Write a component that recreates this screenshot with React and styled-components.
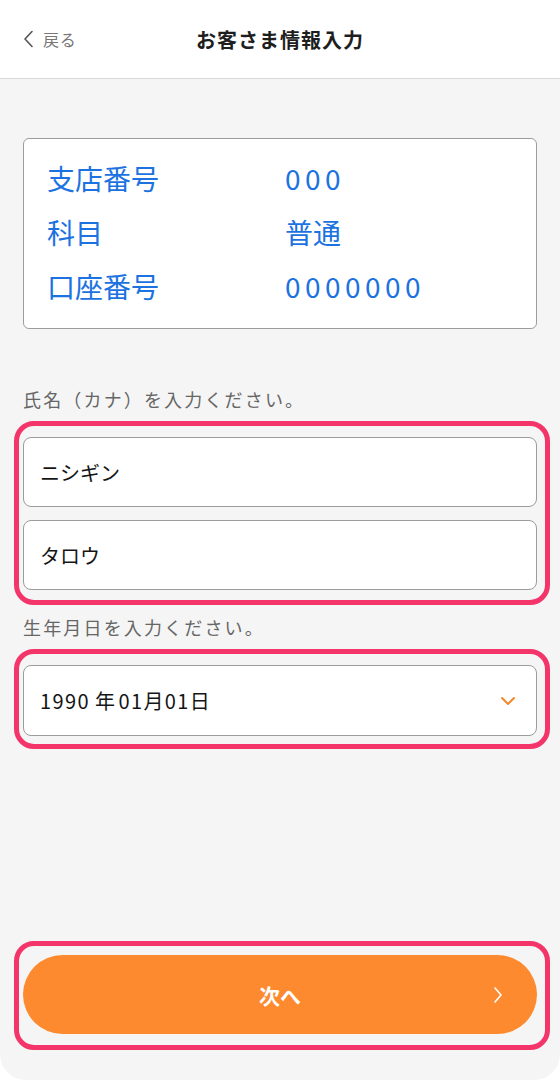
import styled, { createGlobalStyle } from 'styled-components';

const GlobalStyle = createGlobalStyle`
  html, body {
    margin: 0;
    padding: 0;
    background: #ffffff;
  }
  body {
    font-family: "Noto Sans CJK JP", "Noto Sans", sans-serif;
    -webkit-font-smoothing: antialiased;
  }
  * {
    box-sizing: border-box;
  }
`;

const Screen = styled.div`
  display: flex;
  flex-direction: column;
  width: 560px;
  min-height: 1080px;
  background: #f5f5f5;
  border-radius: 0 0 26px 26px;
  overflow: hidden;
`;

const Header = styled.header`
  display: grid;
  grid-template-columns: 1fr auto 1fr;
  align-items: center;
  height: 79px;
  padding: 0 23px;
  background: #ffffff;
  border-bottom: 1px solid #d9d9d9;
`;

const BackLink = styled.button`
  display: flex;
  align-items: center;
  gap: 9px;
  padding: 0;
  border: 0;
  background: none;
  color: #777777;
  font-family: inherit;
  font-size: 16px;
  letter-spacing: 0.05em;
  cursor: pointer;
  justify-self: start;
`;

const Title = styled.h1`
  margin: 0;
  font-size: 20px;
  font-weight: 700;
  color: #1e1e1e;
  letter-spacing: 0.05em;
`;

const Content = styled.main`
  display: flex;
  flex-direction: column;
  flex: 1;
  padding: 59px 23px 30px;
`;

const InfoCard = styled.section`
  display: flex;
  flex-direction: column;
  padding: 12px 23px 15px;
  background: #ffffff;
  border: 1px solid #9c9c9c;
  border-radius: 6px;
`;

const InfoRow = styled.div`
  display: grid;
  grid-template-columns: 238px 1fr;
  align-items: center;
  height: 54px;
  color: #1b72e0;
  font-size: 28px;
`;

const InfoValue = styled.span`
  letter-spacing: ${(p) => (p.$numeric ? '0.16em' : '0')};
`;

const FieldLabel = styled.p`
  margin: ${(p) => p.$top}px 0 10px;
  font-size: 18px;
  line-height: 24px;
  letter-spacing: 0.12em;
  color: #666666;
`;

const Highlight = styled.div`
  display: flex;
  flex-direction: column;
  gap: 13px;
  margin: 0 -13px 0 -9px;
  padding: ${(p) => p.$pad || '11px 8px 10px 4px'};
  border: 5px solid #f3356a;
  border-radius: 20px;
`;

const TextBox = styled.div`
  display: flex;
  align-items: center;
  justify-content: space-between;
  height: ${(p) => p.$h || 70}px;
  padding: 0 20px 0 16px;
  background: #ffffff;
  border: 1px solid #9c9c9c;
  border-radius: 8px;
  color: #151515;
  font-size: 20px;
`;

const DateText = styled.span`
  letter-spacing: 0.07em;
`;

const DatePart = styled.span`
  margin-right: ${(p) => p.$gap || 0}px;
`;

const Spacer = styled.div`
  flex: 1;
`;

const NextButton = styled.button`
  position: relative;
  display: flex;
  align-items: center;
  justify-content: center;
  width: 100%;
  height: 79px;
  border: 0;
  border-radius: 40px;
  background: #fd8a2f;
  color: #ffffff;
  font-family: inherit;
  font-size: 21px;
  font-weight: 700;
  cursor: pointer;
`;

const ButtonChevron = styled.svg`
  position: absolute;
  right: 34px;
  top: 50%;
  transform: translateY(-50%);
`;

export default function App() {
  return (
    <>
      <GlobalStyle />
      <Screen>
        <Header>
          <BackLink>
            <svg width="11" height="18" viewBox="0 0 11 18" fill="none">
              <path d="M9 1.5L2 9l7 7.5" stroke="#555" strokeWidth="1.6" strokeLinecap="round" strokeLinejoin="round" />
            </svg>
            戻る
          </BackLink>
          <Title>お客さま情報入力</Title>
          <span />
        </Header>
        <Content>
          <InfoCard>
            <InfoRow>
              <span>支店番号</span>
              <InfoValue $numeric>000</InfoValue>
            </InfoRow>
            <InfoRow>
              <span>科目</span>
              <InfoValue>普通</InfoValue>
            </InfoRow>
            <InfoRow>
              <span>口座番号</span>
              <InfoValue $numeric>0000000</InfoValue>
            </InfoRow>
          </InfoCard>

          <FieldLabel $top={58}>氏名（カナ）を入力ください。</FieldLabel>
          <Highlight>
            <TextBox>ニシギン</TextBox>
            <TextBox>タロウ</TextBox>
          </Highlight>

          <FieldLabel $top={10}>生年月日を入力ください。</FieldLabel>
          <Highlight $pad="11px 8px 8px 4px">
            <TextBox $h={71}>
              <DateText>
                <DatePart $gap={5}>1990</DatePart>
                <DatePart $gap={2}>年</DatePart>
                <DatePart>01月</DatePart>
                <DatePart>01日</DatePart>
              </DateText>
              <svg width="16" height="10" viewBox="0 0 16 10" fill="none">
                <path d="M2 2l6 6 6-6" stroke="#f08a2c" strokeWidth="2" strokeLinecap="round" strokeLinejoin="round" />
              </svg>
            </TextBox>
          </Highlight>

          <Spacer />

          <Highlight $pad="9px 8px 11px 4px">
            <NextButton>
              次へ
              <ButtonChevron width="10" height="18" viewBox="0 0 10 18" fill="none">
                <path d="M2 2l6 7-6 7" stroke="#fff" strokeWidth="1.6" strokeLinecap="round" strokeLinejoin="round" />
              </ButtonChevron>
            </NextButton>
          </Highlight>
        </Content>
      </Screen>
    </>
  );
}
